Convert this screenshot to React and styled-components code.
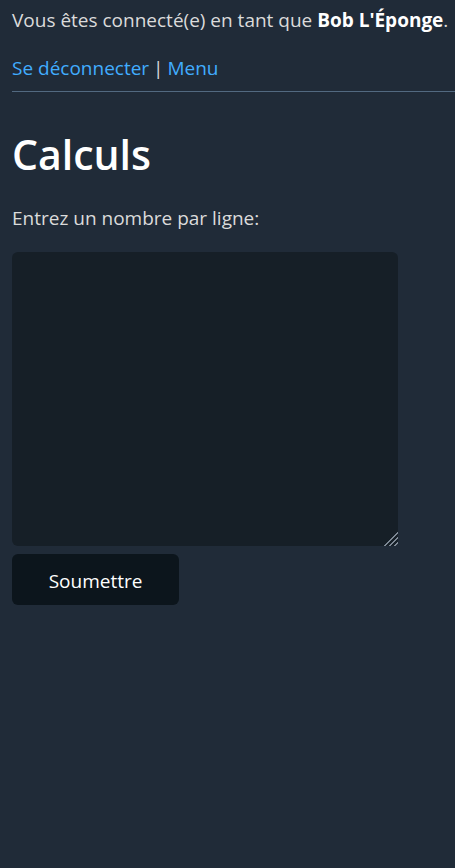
import React from "react";
import styled, { createGlobalStyle } from "styled-components";

const GlobalStyle = createGlobalStyle`
  html, body {
    margin: 0;
    padding: 0;
    background: #202b38;
  }
  body {
    font-family: "Open Sans", "Noto Sans", sans-serif;
    color: #dbdbdb;
    font-size: 19px;
    line-height: 25px;
  }
  * {
    box-sizing: border-box;
  }
`;

const Page = styled.div`
  min-height: 868px;
  padding: 8px 12px 20px;
  display: flex;
  flex-direction: column;
`;

const Status = styled.p`
  margin: 0;
  white-space: nowrap;

  strong {
    color: #fff;
    font-weight: 700;
  }
`;

const Nav = styled.p`
  margin: 23px 0 0;
  word-spacing: -1px;
`;

const Link = styled.a`
  color: #41adff;
  text-decoration: none;
  word-spacing: 0;
`;

const Rule = styled.hr`
  border: none;
  border-top: 1px solid #526980;
  margin: 10px -12px 0 0;
`;

const Title = styled.h1`
  margin: 37px 0 0;
  font-size: 41px;
  line-height: 50px;
  font-weight: 600;
  color: #fff;
`;

const Form = styled.form`
  display: flex;
  flex-direction: column;
  align-items: flex-start;
`;

const Label = styled.label`
  margin-top: 27px;
  display: block;
`;

const Area = styled.textarea`
  margin-top: 21px;
  width: 386px;
  height: 294px;
  background: #161f27;
  color: #dbdbdb;
  border: none;
  border-radius: 6px;
  padding: 10px;
  font-family: inherit;
  font-size: 19px;
  outline: none;

  &::-webkit-resizer {
    background: linear-gradient(
      135deg,
      transparent 0 52%,
      #7d8894 52% 58%,
      transparent 58% 68%,
      #7d8894 68% 74%,
      transparent 74% 84%,
      #7d8894 84% 90%,
      transparent 90%
    );
  }
`;

const Button = styled.button`
  margin-top: 8px;
  width: 167px;
  height: 51px;
  padding-top: 3px;
  background: #0c151c;
  color: #fff;
  border: none;
  border-radius: 6px;
  font-family: inherit;
  font-size: 19px;
  cursor: pointer;
`;

const App = () => {
  return (
    <>
      <GlobalStyle />
      <Page>
        <Status>
          Vous êtes connecté(e) en tant que <strong>Bob L'Éponge</strong>.
        </Status>
        <Nav>
          <Link href="#">Se déconnecter</Link> | <Link href="#">Menu</Link>
        </Nav>
        <Rule />
        <Title>Calculs</Title>
        <Form onSubmit={(e) => e.preventDefault()}>
          <Label htmlFor="nombres">Entrez un nombre par ligne:</Label>
          <Area id="nombres" name="nombres" />
          <Button type="submit">Soumettre</Button>
        </Form>
      </Page>
    </>
  );
};

export default App;
